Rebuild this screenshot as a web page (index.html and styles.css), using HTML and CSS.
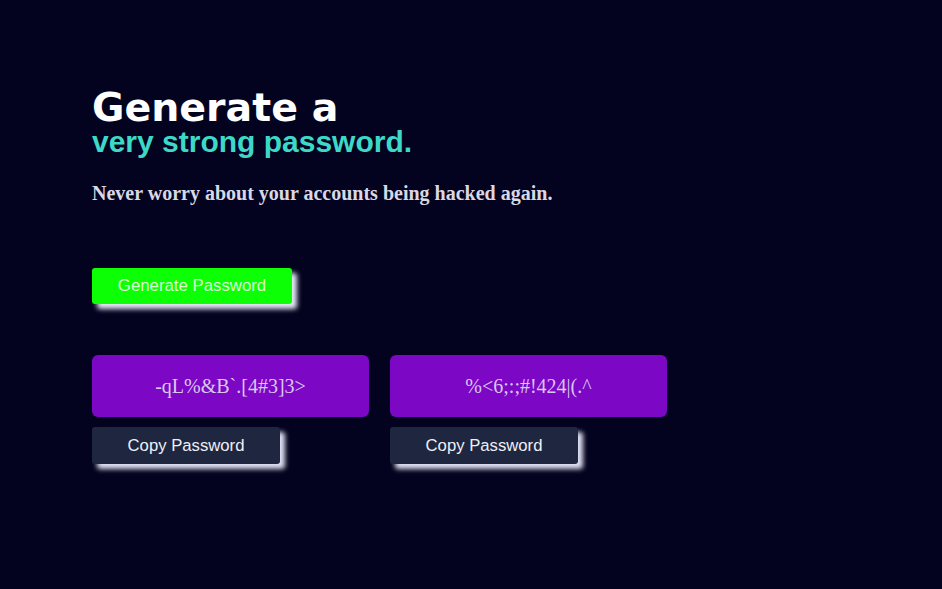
FILE: index.html
```html
<!DOCTYPE html>
<html>
<head>
<meta charset="utf-8">
<link rel="stylesheet" href="styles.css">
</head>
<body>
<main class="page">
  <h1 class="title">Generate a<span class="accent">very strong password.</span></h1>
  <p class="lead">Never worry about your accounts being hacked again.</p>
  <button class="gen-btn">Generate Password</button>
  <div class="results">
    <div class="result">
      <div class="pw-box">-qL%&amp;B`.[4#3]3&gt;</div>
      <button class="copy-btn">Copy Password</button>
    </div>
    <div class="result">
      <div class="pw-box">%&lt;6;:;#!424|(.^</div>
      <button class="copy-btn">Copy Password</button>
    </div>
  </div>
</main>
</body>
</html>
```
FILE: styles.css
```css
html, body {
  margin: 0;
  padding: 0;
  background: #03031f;
  height: 100%;
}
.page {
  padding: 88px 0 0 92px;
  display: flex;
  flex-direction: column;
  align-items: flex-start;
}
.title {
  margin: 0;
  font-family: "DejaVu Sans", sans-serif;
  font-weight: bold;
  font-size: 39.5px;
  line-height: 38px;
  color: #ffffff;
  display: flex;
  flex-direction: column;
}
.accent {
  font-family: "Liberation Sans", Arial, sans-serif;
  font-size: 30px;
  line-height: 32px;
  color: #3dd9c8;
}
.lead {
  margin: 24px 0 0 0;
  font-family: "Liberation Serif", serif;
  font-weight: bold;
  font-size: 20px;
  line-height: 22px;
  color: #d9d9e6;
}
.gen-btn {
  margin-top: 64px;
  width: 200px;
  height: 36px;
  border: none;
  border-radius: 3px;
  background: #0dff05;
  color: #d9ffd0;
  font-family: "Liberation Sans", Arial, sans-serif;
  font-size: 16.8px;
  box-shadow: 5px 5px 5px #e8e8f8;
  padding: 0;
}
.results {
  margin-top: 51px;
  display: flex;
  gap: 21px;
}
.result {
  display: flex;
  flex-direction: column;
  align-items: flex-start;
  gap: 10px;
}
.pw-box {
  width: 277px;
  height: 62px;
  border-radius: 6px;
  background: #7c07c5;
  color: #d8c6ee;
  font-family: "Liberation Serif", serif;
  font-size: 20px;
  display: flex;
  align-items: center;
  justify-content: center;
}
.copy-btn {
  width: 188px;
  height: 37px;
  border: none;
  border-radius: 3px;
  background: #1e2640;
  color: #eef0f8;
  font-family: "Liberation Sans", Arial, sans-serif;
  font-size: 16.7px;
  box-shadow: 5px 5px 5px #e0e0f4;
  padding: 0;
}
```
